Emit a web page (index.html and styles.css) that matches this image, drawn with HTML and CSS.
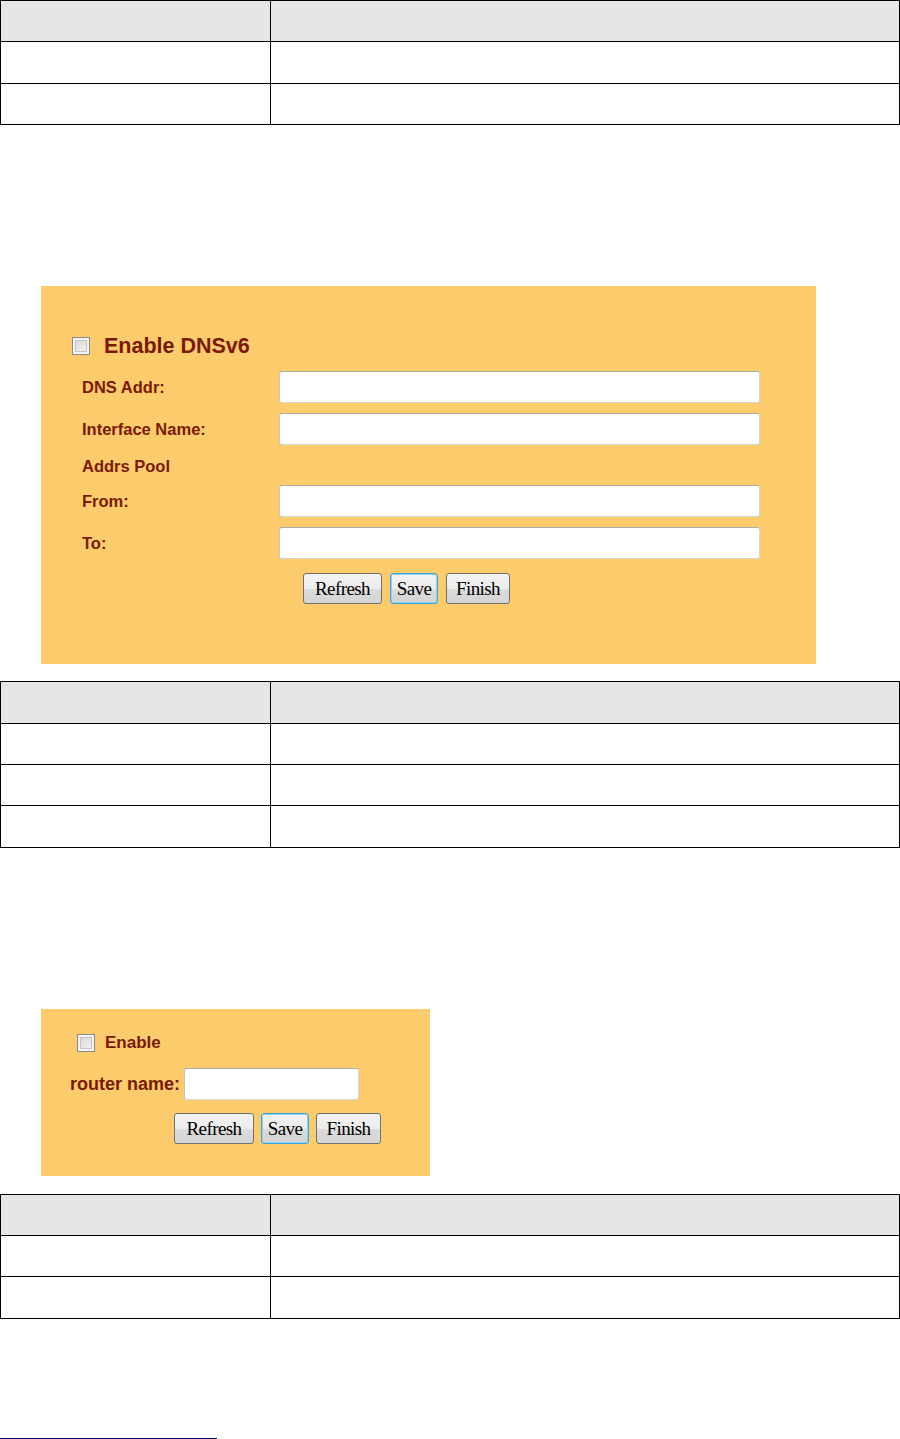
FILE: index.html
```html
<!DOCTYPE html>
<html>
<head>
    <title>DNSv6 Settings</title>
    <link rel="stylesheet" href="styles.css">
</head>
<body>

<table class="grid">
    <tr class="head"><td class="key"></td><td></td></tr>
    <tr class="tall"><td class="key"></td><td></td></tr>
    <tr><td class="key"></td><td></td></tr>
</table>

<div class="panel panel-dns">
    <label class="enable-row">
        <input type="checkbox" class="check">
        <span class="enable-title">Enable DNSv6</span>
    </label>
    <div class="field">
        <span class="label">DNS Addr:</span>
        <input type="text" class="text-in">
    </div>
    <div class="field">
        <span class="label">Interface Name:</span>
        <input type="text" class="text-in">
    </div>
    <div class="pool">Addrs Pool</div>
    <div class="field">
        <span class="label">From:</span>
        <input type="text" class="text-in">
    </div>
    <div class="field">
        <span class="label">To:</span>
        <input type="text" class="text-in">
    </div>
    <div class="buttons">
        <button class="btn btn-refresh">Refresh</button>
        <button class="btn btn-save">Save</button>
        <button class="btn btn-finish">Finish</button>
    </div>
</div>

<table class="grid grid-second">
    <tr class="head tall"><td class="key"></td><td></td></tr>
    <tr><td class="key"></td><td></td></tr>
    <tr><td class="key"></td><td></td></tr>
    <tr class="tall"><td class="key"></td><td></td></tr>
</table>

<div class="panel panel-router">
    <label class="enable-row small">
        <input type="checkbox" class="check">
        <span class="enable-small">Enable</span>
    </label>
    <div class="router-row">
        <span class="label-router">router name:</span>
        <input type="text" class="text-in router-in">
    </div>
    <div class="buttons small-buttons">
        <button class="btn btn-refresh">Refresh</button>
        <button class="btn btn-save">Save</button>
        <button class="btn btn-finish">Finish</button>
    </div>
</div>

<table class="grid grid-third">
    <tr class="head"><td class="key"></td><td></td></tr>
    <tr><td class="key"></td><td></td></tr>
    <tr class="tall"><td class="key"></td><td></td></tr>
</table>

<div class="footnote-rule"></div>

</body>
</html>
```

FILE: styles.css
```css
body { margin: 0; font-family: "Liberation Sans", Arial, sans-serif; background: #fff; }

.grid { width: 900px; border-collapse: collapse; table-layout: fixed; }
.grid td { border: 1px solid #000; height: 40px; padding: 0; }
.grid tr.tall td { height: 41px; }
.grid td.key { width: 269px; }
.grid tr.head td { background-color: #e6e6e6; }
.grid-second { margin-top: 17px; }
.grid-third { margin-top: 18px; }

.panel { background-color: #fccb6b; margin-left: 41px; box-sizing: border-box; color: #7a1a06; }
.panel-dns { width: 775px; height: 378px; margin-top: 161px; padding: 48px 0 0 0; }
.panel-router { width: 389px; height: 167px; margin-top: 161px; padding: 24px 0 0 0; }

.enable-row { display: flex; align-items: center; height: 24px; padding-left: 31px; }
.enable-row.small { padding-left: 36px; height: 20px; }
.check {
    appearance: none; -webkit-appearance: none; margin: 0;
    width: 18px; height: 18px; box-sizing: border-box;
    border: 1px solid #8a8a8a;
    background: linear-gradient(135deg, #d4d4d4, #f6f6f6);
    box-shadow: inset 0 0 0 2px #f4f4f4, inset 0 0 0 3px #c4c4c4;
}
.enable-title { font-weight: bold; font-size: 21.5px; margin-left: 14px; }
.enable-small { font-weight: bold; font-size: 17px; margin-left: 10px; }

.field { display: flex; align-items: center; padding-left: 41px; margin-top: 10px; }
.panel-dns .enable-row + .field { margin-top: 13px; }
.label { width: 197px; font-weight: bold; font-size: 16.5px; }
.text-in {
    width: 481px; height: 32px; box-sizing: border-box; margin: 0;
    border: 1px solid #d6d6d6; border-top-color: #ababab; border-left-color: #c4c4c4;
    border-radius: 3px; background: #fff; outline: none;
}
.pool { padding-left: 41px; margin-top: 10px; height: 22px; line-height: 22px; font-weight: bold; font-size: 16.5px; margin-bottom: -2px; }

.buttons { display: flex; gap: 8px; padding-left: 262px; margin-top: 14px; }
.small-buttons { padding-left: 133px; margin-top: 13px; gap: 7px; }
.btn {
    height: 31px; box-sizing: border-box; padding: 0; margin: 0;
    font-family: "Liberation Serif", "Times New Roman", serif; font-size: 19px; color: #000;
    border: 1px solid #707070; border-radius: 3px;
    background: linear-gradient(#f3f3f3, #ececec 50%, #dcdcdc 51%, #d4d4d4);
    letter-spacing: -0.6px;
}
.btn-refresh { width: 79px; }
.btn-save { width: 48px; border-color: #3aa3e0; box-shadow: inset 0 0 0 1px #8fd3f8; }
.btn-finish { width: 64px; }
.small-buttons .btn-refresh { width: 80px; }
.small-buttons .btn-finish { width: 65px; }

.router-row { display: flex; align-items: center; padding-left: 29px; margin-top: 15px; }
.label-router { font-weight: bold; font-size: 18px; margin-right: 4px; }
.router-in { width: 175px; }

.footnote-rule { width: 217px; height: 1px; background-color: #000080; margin-top: 119px; }
```
